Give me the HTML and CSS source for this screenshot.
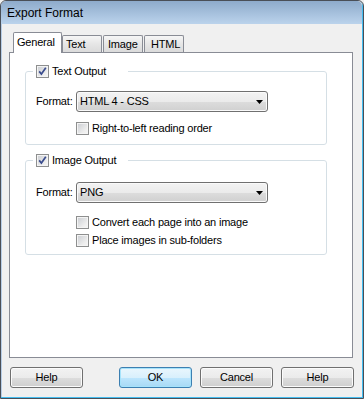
FILE: index.html
```
<!DOCTYPE html>
<html>
<head>
<meta charset="utf-8">
<link rel="stylesheet" href="styles.css">
</head>
<body>
<div class="window">
  <div class="titlebar">Export Format</div>
  <div class="content">
    <div class="tabs">
      <div class="tab tab-active tab-general">General</div>
      <div class="tab tab-text">Text</div>
      <div class="tab tab-image">Image</div>
      <div class="tab tab-html">HTML</div>
    </div>
    <div class="panel">
      <fieldset class="group group-text">
        <legend class="group-legend">
          <span class="check"><span class="box"><svg class="tick" viewBox="0 0 11 11" width="11" height="11"><path d="M2.2 5.4 L4.4 8 L8.8 1.8" fill="none" stroke="#3b4d8e" stroke-width="1.7"/></svg></span>Text Output</span>
        </legend>
        <div class="format-row">
          <span class="format-label">Format:</span>
          <div class="select"><span>HTML 4 - CSS</span><svg viewBox="0 0 7 4" width="7" height="4"><path d="M0 0 H7 L3.5 4 Z" fill="#000"/></svg></div>
        </div>
        <div class="check check-row"><span class="box"></span>Right-to-left reading order</div>
      </fieldset>
      <fieldset class="group group-image">
        <legend class="group-legend">
          <span class="check"><span class="box"><svg class="tick" viewBox="0 0 11 11" width="11" height="11"><path d="M2.2 5.4 L4.4 8 L8.8 1.8" fill="none" stroke="#3b4d8e" stroke-width="1.7"/></svg></span>Image Output</span>
        </legend>
        <div class="format-row format-row-image">
          <span class="format-label">Format:</span>
          <div class="select"><span>PNG</span><svg viewBox="0 0 7 4" width="7" height="4"><path d="M0 0 H7 L3.5 4 Z" fill="#000"/></svg></div>
        </div>
        <div class="check check-row check-row-first"><span class="box"></span>Convert each page into an image</div>
        <div class="check check-row check-row-second"><span class="box"></span>Place images in sub-folders</div>
      </fieldset>
    </div>
    <div class="buttons">
      <div class="btn">Help</div>
      <div class="btn btn-default">OK</div>
      <div class="btn btn-gap">Cancel</div>
      <div class="btn btn-gap">Help</div>
    </div>
  </div>
</div>
</body>
</html>
```
FILE: styles.css
```
html, body {
  margin: 0;
  padding: 0;
  background: #f0f0f0;
}
body {
  font-family: "Liberation Sans", Arial, sans-serif;
  font-size: 11px;
  letter-spacing: -0.2px;
  color: #000;
}
.window {
  width: 364px;
  height: 399px;
  box-sizing: border-box;
  border: 1px solid #4a4f57;
  border-radius: 6px 6px 0 0;
  background: #f0f0f0;
  box-shadow: inset -1px -1px 0 #45bdf0, inset 1px 0 0 #b7cde6;
  overflow: hidden;
}
.titlebar {
  height: 23px;
  box-sizing: border-box;
  margin-right: 1px;
  padding: 2px 0 0 6px;
  line-height: 21px;
  font-size: 12px;
  letter-spacing: 0;
  background: linear-gradient(#8eabcb, #bbd3ec);
  border-radius: 5px 5px 0 0;
}
.content {
  padding: 8px 0 0 8px;
}
.tabs {
  display: flex;
  align-items: flex-end;
  height: 21px;
  padding-left: 4px;
  margin-bottom: -1px;
  position: relative;
  z-index: 1;
}
.tab {
  box-sizing: border-box;
  height: 17px;
  margin-bottom: 1px;
  border: 1px solid #898c95;
  border-bottom: none;
  border-radius: 2px 2px 0 0;
  background: linear-gradient(#f6f6f6, #e6e6e6 50%, #dbdbdb);
  padding-top: 1px;
  line-height: 15px;
  white-space: nowrap;
}
.tab-active {
  height: 21px;
  margin-bottom: 0;
  background: #fff;
  padding-top: 2px;
}
.tab-general { width: 49px; padding-left: 3px; }
.tab-text { width: 40px; padding-left: 3px; }
.tab-image { width: 40px; padding-left: 4px; margin-left: 1px; }
.tab-html { width: 40px; padding-left: 6px; margin-left: 1px; }
.panel {
  box-sizing: border-box;
  width: 344px;
  height: 306px;
  border: 1px solid #898c95;
  background: #fff;
  padding: 12px 0 0 15px;
}
.group {
  margin: 0;
  width: 302px;
  box-sizing: border-box;
  min-inline-size: 0;
  border: 1px solid #d5dfe5;
  border-radius: 3px;
  padding: 0 0 9px 7px;
}
.group-image {
  margin-top: 9px;
  padding-bottom: 7px;
}
.group-legend {
  box-sizing: border-box;
  width: 95px;
  padding: 0 0 0 3px;
}
.check {
  display: flex;
  align-items: center;
  gap: 3px;
  height: 13px;
  line-height: 13px;
  white-space: nowrap;
}
.box {
  flex: none;
  width: 13px;
  height: 13px;
  box-sizing: border-box;
  border: 1px solid #8e8f8f;
  background: linear-gradient(135deg, #c9ccd1, #eeeeee 70%, #f6f6f6);
  box-shadow: inset 0 0 0 1px #f4f4f4;
  display: flex;
  position: relative;
}
.tick {
  display: block;
}
.format-row {
  display: flex;
  align-items: center;
  height: 21px;
  line-height: 13px;
  margin: 13px 0 0 3px;
}
.format-row-image {
  margin-top: 15px;
}
.format-label {
  width: 40px;
}
.select {
  width: 192px;
  height: 21px;
  box-sizing: border-box;
  border: 1px solid #707070;
  border-radius: 3px;
  background: linear-gradient(#f3f3f3, #ebebeb 50%, #dddddd 50%, #d0d0d0);
  box-shadow: inset 0 0 0 1px #fafafa;
  display: flex;
  align-items: center;
  justify-content: space-between;
  padding: 0 4px 0 3px;
}
.select svg {
  display: block;
}
.check-row {
  margin: 10px 0 0 43px;
}
.check-row-first {
  margin-top: 13px;
}
.check-row-second {
  margin-top: 5px;
}
.buttons {
  display: flex;
  margin-top: 9px;
  padding-left: 1px;
}
.btn {
  width: 73px;
  height: 21px;
  box-sizing: border-box;
  border: 1px solid #707070;
  border-radius: 3px;
  background: linear-gradient(#f2f2f2, #ebebeb 50%, #dddddd 50%, #cfcfcf);
  box-shadow: inset 0 0 0 1px #fbfbfb;
  text-align: center;
  line-height: 19px;
}
.btn-default {
  margin-left: 36px;
  border-color: #3c7fb1;
  background: linear-gradient(#eaf6fd, #d9f0fc 50%, #bee6fd 50%, #a7d9f5);
  box-shadow: inset 0 0 0 1px #a6e3fb;
}
.btn-gap {
  margin-left: 8px;
}
```
